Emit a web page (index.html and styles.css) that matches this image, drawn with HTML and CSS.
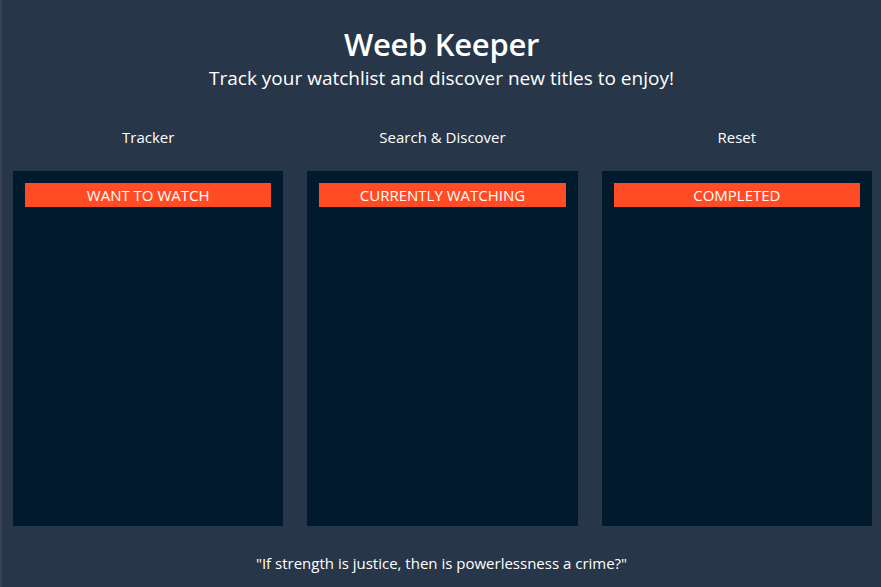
FILE: index.html
```html
<!DOCTYPE html>
<html lang="en">
<head>
<meta charset="utf-8">
<title>Weeb Keeper</title>
<link rel="stylesheet" href="styles.css">
</head>
<body>
<div class="page">
  <header class="hero">
    <h1 class="title">Weeb Keeper</h1>
    <p class="subtitle">Track your watchlist and discover new titles to enjoy!</p>
  </header>
  <nav class="nav">
    <a class="nav-link">Tracker</a>
    <a class="nav-link">Search &amp; Discover</a>
    <a class="nav-link">Reset</a>
  </nav>
  <main class="board">
    <section class="column">
      <h2 class="column-head">WANT TO WATCH</h2>
    </section>
    <section class="column">
      <h2 class="column-head">CURRENTLY WATCHING</h2>
    </section>
    <section class="column">
      <h2 class="column-head">COMPLETED</h2>
    </section>
  </main>
  <footer class="quote">"If strength is justice, then is powerlessness a crime?"</footer>
</div>
</body>
</html>
```
FILE: styles.css
```css
html, body {
  margin: 0;
  padding: 0;
  height: 100%;
}
body {
  background: #283649;
  color: #ffffff;
  font-family: "Open Sans", "Noto Sans", sans-serif;
}
.page {
  min-height: 100%;
  border-left: 2px solid #3a4354;
  box-sizing: border-box;
  padding-top: 24px;
}
.hero {
  text-align: center;
}
.title {
  margin: 0;
  font-size: 31px;
  line-height: 40px;
  font-weight: 600;
  letter-spacing: -0.3px;
}
.subtitle {
  margin: 0;
  font-size: 19px;
  line-height: 28px;
}
.nav,
.board {
  display: grid;
  grid-template-columns: repeat(3, 1fr);
  gap: 24px;
  padding: 0 9px 0 11px;
}
.nav {
  margin-top: 33px;
}
.nav-link {
  text-align: center;
  font-size: 15px;
  line-height: 24px;
}
.board {
  margin-top: 22px;
}
.column {
  background: #011a2e;
  height: 355px;
  padding: 12px;
  box-sizing: border-box;
}
.column-head {
  margin: 0;
  background: #ff4c24;
  height: 24px;
  line-height: 24px;
  text-align: center;
  font-size: 15px;
  font-weight: 400;
}
.quote {
  margin-top: 25px;
  text-align: center;
  font-size: 15px;
  line-height: 24px;
}
```
